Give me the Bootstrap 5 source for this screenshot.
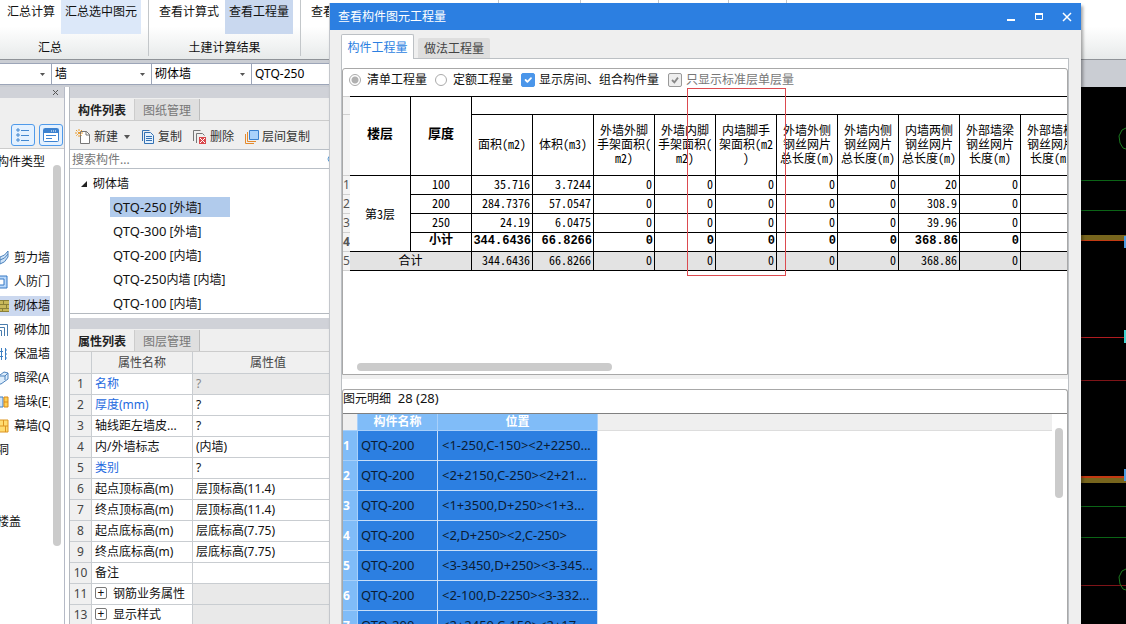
<!DOCTYPE html>
<html lang="zh-CN">
<head>
<meta charset="utf-8">
<meta name="viewport" content="width=device-width, initial-scale=1">
<title>查看构件图元工程量</title>
<link href="https://cdn.jsdelivr.net/npm/bootstrap@5.3.0/dist/css/bootstrap.min.css" rel="stylesheet">
<style>
:root { --ui: "Noto Sans", "Noto Sans CJK SC", sans-serif; --cjk: "Noto Sans CJK SC", sans-serif; --line: #b4b9bf; }
body { font: 12px/16px var(--ui); color: #111; background: #efefef; }
button, input { font: inherit; color: inherit; }
button { border: 0; background: none; padding: 0; white-space: nowrap; }
.latin { font-size: 13px; }

/* ribbon */
.ribbon { height: 60px; background: linear-gradient(#fff 45%, #e7eaea); border-bottom: 1px solid #8f9398; white-space: nowrap; overflow: hidden; }
.ribbon-group { border-right: 1px solid #c3c7ca; height: 56px; flex: none; }
.ribbon-group .tools { height: 34px; padding: 0 7px 0 3px; gap: 2px; }
.ribbon-group .tools.wide { padding: 0 7px 0 6px; }
.ribbon-group button { height: 34px; padding: 4px 4px 14px; }
.ribbon-group .caption { padding-top: 6px; }
.hot { background: #dce8f9; }
.ribbon-group .on { background: #c9d8ef; }

/* selector bar */
.selectors { height: 27px; background: #cacdd3; padding: 3px 0 2px; }
.combo { appearance: none; border: 1px solid #9ca5b8; border-left-width: 0; border-radius: 0; width: 100px; height: 22px; padding: 0 3px; background: #fff url("data:image/svg+xml,%3Csvg xmlns='http://www.w3.org/2000/svg' width='5' height='3'%3E%3Cpath d='M0 0h5L2.5 3z' fill='%23555'/%3E%3C/svg%3E") no-repeat right 6px center; font: inherit; }
.combo.short { width: 52px; }

/* side panels */
.strip { height: 11px; background: #d0d2d8; }
.types { width: 65px; border-right: 1px solid #b5bac6; }
.types .toolrow { height: 51px; padding: 26px 1px 0 0; gap: 4px; background: #efefef; border-bottom: 1px solid #ccc; }
.viewbtn { width: 24px; height: 22px; border: 1px solid #4f9aea; border-radius: 3px; background: #e4f1ff; }
.typelist { list-style: none; margin: 0; padding: 1px 0 0; width: 50px; overflow: hidden; white-space: nowrap; }
.typelist li { height: 24px; display: flex; align-items: center; gap: 5px; }
.typelist li svg { flex: none; }
.typelist li.cut { margin-left: -3px; }
.typelist .sel { background: linear-gradient(#fff 2px, #cbd8ef 2px, #cbd8ef 22px, #fff 22px); }
.thumb { background: #cbcbcb; border-radius: 4px; }
.types .thumb { width: 8px; height: 381px; margin: 16px 3px 0 auto; }
.lists { width: 261px; margin-left: 4px; border-left: 1px solid var(--line); }
.tabrow { height: 23px; background: #efefef; border-bottom: 1px solid #ccc; padding-top: 1px; }
.tabrow button { width: 65px; color: #777; background: #dfdfdf; border-right: 1px solid #bcbcbc; padding-top: 2px; }
.tabrow button.active { color: #222; font-weight: 700; background: #efefef; border-right-color: #ccc; }
.toolbar { height: 28px; background: #efefef; padding: 3px 20px 0 5px; color: #333; }
.toolbar button { display: flex; align-items: center; gap: 3px; }
.search { height: 20px; border: 1px solid #b9bfc6; border-width: 1px 0; padding: 0 2px; outline: 0; background: #fff url("data:image/svg+xml,%3Csvg xmlns='http://www.w3.org/2000/svg' width='3' height='8'%3E%3Ccircle cx='4' cy='4' r='3' fill='none' stroke='%235b9bd5'/%3E%3C/svg%3E") no-repeat right center; }
.search::placeholder { color: #777; opacity: 1; }
.tree { list-style: none; margin: 0; padding: 2px 0 0; height: 145px; border-bottom: 1px solid var(--line); }
.tree li { height: 24px; padding: 2px 0 2px 40px; }
.tree li > span { display: block; width: 120px; height: 20px; padding: 1px 3px; line-height: 18px; }
.tree .root { padding: 3px 0 2px 10px; display: flex; align-items: center; gap: 5px; }
.tree .sel > span { background: #b1cbec; }
.props { width: 100%; table-layout: fixed; border-collapse: separate; border-spacing: 0; }
.props th, .props td { height: 21px; padding: 0 3px; border: 1px solid #c9cdd1; border-width: 0 1px 1px 0; white-space: nowrap; font-weight: 400; line-height: 20px; overflow: hidden; }
.props thead th { height: 22px; }
.props th { background: #f0f0f0; text-align: center; color: #444; padding: 0; }
.props thead .val { padding-left: 14px; }
.props .name { color: #1f6be0; }
.props .off { background: #e9e9e9; color: #888; }
.plus { width: 12px; height: 12px; border: 1px solid #777; border-radius: 2px; display: inline-flex; align-items: center; justify-content: center; line-height: 10px; margin-right: 6px; vertical-align: 1px; }
.model { background: #000; }

/* dialog window */
.dialog { position: absolute; top: 3px; left: 329px; right: 45px; bottom: 0; background: #efefef; border-left: 1px solid #c4c7cc; box-shadow: 2px 3px 3px rgba(0,0,0,.35); overflow: hidden; }
.titlebar { height: 27px; background: #2c7fe1; color: #fff; padding: 0 9px 0 8px; }
.titlebar button { display: flex; }
.dlgtabs { padding: 4px 0 0 11px; height: 28px; gap: 4px; flex: none; }
.dlgtabs button { width: 72px; background: #dedede; color: #444; margin-top: 4px; border-radius: 2px 2px 0 0; height: 20px; padding-top: 2px; }
.dlgtabs button.active { width: 73px; background: #fff; color: #2c7fe1; margin: 0 0 -1px; height: 25px; border: 1px solid #bcc0c4; border-bottom: 0; position: relative; z-index: 1; }
.pane { margin: 0 12px 0 11px; border: 1px solid #bcc0c4; border-bottom: 0; background: #fff; padding-top: 9px; min-height: 0; }
.box { border: 1px solid #a8a8a8; border-radius: 3px 3px 0 0; overflow: hidden; }
.upper { height: 307px; flex: none; }
.divide { height: 4px; background: #efefef; margin-bottom: 10px; flex: none; }
.opts { height: 27px; padding: 0 0 5px 6px; white-space: nowrap; flex: none; }
.opts .form-check-input { margin: 0; width: 12px; height: 12px; border-color: #aaa; opacity: 1; float: none; flex: none; }
.opts .form-check-input[type=checkbox] { width: 14px; height: 14px; border-radius: 2px; }
.opts .form-check-input[type=checkbox]:checked { background-color: #4b96ea; border-color: #4b96ea; }
.opts .form-check-input[type=checkbox]:disabled { background-color: #eee; border-color: #999; background-image: url("data:image/svg+xml,%3Csvg xmlns='http://www.w3.org/2000/svg' viewBox='0 0 20 20'%3E%3Cpath fill='none' stroke='%23888' stroke-width='3' d='m5 10 4 4 6-8'/%3E%3C/svg%3E"); }
.opts .form-check-input[type=radio]:checked { background: radial-gradient(#b0b0b0 3px, #fff 4px); border-color: #aaa; }
.opts label { opacity: 1; }
.opts .lr { margin: 0 8px 0 6px; }
.opts .lc { margin: 0 9px 0 4px; }
.opts label.muted { color: #777; }
.qty { table-layout: fixed; width: 739px; border-collapse: separate; border-spacing: 0; font-family: var(--cjk); font-feature-settings: "hwid"; color: #000; }
.qty th, .qty td { border: 1px solid #000; border-width: 0 1px 1px 0; padding: 0 2px 2px; font-weight: 400; text-align: right; height: 19px; line-height: 14px; white-space: nowrap; }
.qty thead th { text-align: center; border-top: 0; padding: 0 1px 2px; }
.qty thead tr:first-child th { border-top: 1px solid #000; }
.qty thead th.head { font-size: 13px; font-weight: 700; padding-bottom: 6px; }
.qty .mid { text-align: center; }
.qty td.floor { padding-bottom: 0; }
.qty th.gut { border: 1px solid #d0d0d0; border-width: 0 0 1px; background: #f4f4f4; padding: 0; text-align: left; color: #555; font: 12px/18px var(--ui); overflow: hidden; }
.qty thead tr:first-child th.gut { border-top: 1px solid #d0d0d0; }
.qty .sub th.gut { font-weight: 700; }
.qty .sub td { font: 700 12px/14px "Liberation Mono", "Noto Sans CJK SC", monospace; padding: 0 1px 2px; }
.qty .total td { background: #e3e3e3; }
.upper .thumb { width: 255px; height: 8px; margin: auto 0 3px 14px; }
.detail-title { height: 23px; line-height: 16px; font-size: 13px; white-space: pre; flex: none; }
.detail-title span { font-size: 12px; }
.detail-body { border-top: 1px solid #808080; min-height: 0; }
.headfill { height: 17px; background: #efefef; border-bottom: 1px solid #ddd; }
.details { width: 255px; table-layout: fixed; border-collapse: separate; border-spacing: 0; font-size: 13px; flex: none; align-self: flex-start; }
.details th { background: #80bcf8; color: #fff; border: 1px solid #a8d0fa; border-width: 0 1px 1px 0; height: 17px; padding: 0; line-height: 16px; font-size: 12px; text-align: center; }
.details tbody th { text-align: left; }
.details thead th:first-child { background: #efefef; }
.details td { background: #2c7fe1; color: #0b1c33; height: 30px; border: 1px solid #c9dff8; border-width: 0 1px 1px 0; padding: 0 4px 2px 3px; white-space: nowrap; overflow: hidden; text-overflow: ellipsis; }
.details td:last-child { padding-left: 4px; }
.rail { width: 15px; flex: none; }
.rail .thumb { width: 8px; height: 70px; margin: 14px 0 0 3px; }
.marker { position: absolute; left: 357px; top: 85px; width: 99px; height: 188px; border: 1px solid #dc4a4f; pointer-events: none; }
</style>
</head>
<body class="vh-100 overflow-hidden d-flex flex-column position-relative">
<header class="ribbon d-flex flex-shrink-0">
  <section class="ribbon-group text-center">
    <div class="tools d-flex"><button>汇总计算</button><button class="hot">汇总选中图元</button></div>
    <div class="caption pe-5">汇总</div>
  </section>
  <section class="ribbon-group text-center">
    <div class="tools wide d-flex"><button>查看计算式</button><button class="on">查看工程量</button></div>
    <div class="caption">土建计算结果</div>
  </section>
  <section class="ribbon-group" style="width:198px"><div class="tools wide d-flex"><button>查看</button></div></section>
  <section class="ribbon-group" style="width:82px"></section>
  <section class="ribbon-group" style="width:78px"></section>
  <section class="ribbon-group" style="width:70px"></section>
  <section class="ribbon-group" style="width:58px"></section>
</header>
<nav class="selectors d-flex flex-shrink-0" aria-label="构件选择">
  <select class="combo short" aria-label="楼层"><option></option></select>
  <select class="combo" aria-label="构件大类"><option>墙</option></select>
  <select class="combo" aria-label="构件类型"><option>砌体墙</option></select>
  <select class="combo latin" aria-label="构件"><option>QTQ-250</option></select>
</nav>
<main class="d-flex flex-grow-1 overflow-hidden bg-white">
  <aside class="types flex-shrink-0 d-flex flex-column">
    <div class="strip d-flex align-items-center justify-content-end pe-1 flex-shrink-0"><button aria-label="关闭" class="d-flex"><svg width="8" height="7"><path d="M1 1l5 5M6 1L1 6" stroke="#555"/></svg></button></div>
    <div class="toolrow d-flex justify-content-end flex-shrink-0">
      <button class="viewbtn d-flex align-items-center justify-content-center flex-shrink-0" aria-label="列表"><svg width="14" height="14"><path d="M1 1h2v2H1zM1 6h2v2H1zM1 11h2v2H1z" fill="none" stroke="#4287cf"/><path d="M5 2.500h8M5 7.500h8M5 12.500h8" stroke="#4287cf"/></svg></button>
      <button class="viewbtn d-flex align-items-center justify-content-center flex-shrink-0" aria-label="窗口"><svg width="16" height="14"><rect x=".5" y=".5" width="15" height="13" rx="1" fill="#fff" stroke="#3c82d0"/><path d="M1 1h14v4H1z" fill="#3c82d0"/><path d="M8 3h1m1 0h1m1 0h1" stroke="#fff"/><path d="M3 7.500h10M3 10.500h6" stroke="#3c82d0"/></svg></button>
    </div>
    <div class="d-flex flex-grow-1">
      <ul class="typelist">
        <li class="cut">构件类型</li><li></li><li></li><li></li>
        <li><svg width="9" height="16"><path d="M0 7Q5 6 8 1v6Q5 13 0 14z" fill="#cfe3f8" stroke="#4d83bd"/><path d="M0 10q5-1 8-6" fill="none" stroke="#4d83bd"/></svg>剪力墙</li>
        <li><svg width="9" height="16"><path d="M0 2h7v12H0" fill="#b9d8fa" stroke="#3678c4"/><path d="M0 5h4v6H0" fill="#fff" stroke="#3678c4"/></svg>人防门</li>
        <li class="sel"><svg width="9" height="14"><path d="M0 1h9v12H0z" fill="#c9b95a"/><path d="M0 1.500h9M0 5.500h9M0 9.500h9M0 12.500h9M3.500 2v4M6.500 6v4M2.500 10v3" stroke="#8a8037"/></svg>砌体墙</li>
        <li><svg width="9" height="16"><path d="M0 2.500h7.500V14M0 5.500h4.500V14M0 8.500h1.500V14" fill="none" stroke="#497cad"/></svg>砌体加筋</li>
        <li><svg width="9" height="16"><path d="M1.500 2v12M5.500 2v12M0 5.500h3M0 10.500h3" stroke="#3d7fc2"/><path d="M5 4h2M5 8h2M5 12h2" stroke="#3d7fc2"/></svg>保温墙</li>
        <li><svg width="9" height="16"><path d="M0 5l4-3 4 1v6l-7 5H0" fill="#dcecfb" stroke="#4d83bd"/><path d="M0 6l5 0 3-3M5 6v4" fill="none" stroke="#4d83bd"/></svg>暗梁(A)</li>
        <li><svg width="9" height="14"><path d="M0 2h3v10H0" fill="#cfe3f8" stroke="#3d7fc2"/><path d="M4 2h4v10H4z" fill="#ffcf50" stroke="#d98a1c"/><path d="M4 7h4" stroke="#d98a1c"/></svg>墙垛(E)</li>
        <li><svg width="9" height="14"><path d="M0 1h8v12H0" fill="#ffdc70" stroke="#dc9420"/><path d="M0 7h8M3.500 1v6M5.500 7v6" stroke="#dc9420"/></svg>幕墙(Q)</li>
        <li class="cut">洞</li><li></li><li></li><li class="cut">楼盖</li>
      </ul>
      <div class="thumb"></div>
    </div>
  </aside>
  <section class="lists flex-shrink-0">
    <div class="strip"></div>
    <div class="tabrow d-flex"><button class="active">构件列表</button><button>图纸管理</button></div>
    <div class="toolbar d-flex align-items-center justify-content-between">
      <button><svg width="16" height="16"><path d="M5.500 2.500h6l3 3v9h-9z" fill="#fff" stroke="#777"/><path d="M11 2v4h4" fill="none" stroke="#777"/><path d="M4 0v8M0 4h8M1 1l6 6M7 1L1 7" stroke="#e99a2b" stroke-dasharray="2 1"/></svg>新建<svg width="10" height="4"><path d="M3 0h6L6 4z" fill="#555"/></svg></button>
      <button><svg width="14" height="16"><path d="M1.500 12V1.500h7" fill="none" stroke="#3572b4"/><path d="M3.500 3.500h6l3 3v8h-9z" fill="#e5f1fd" stroke="#3572b4"/><path d="M5 7.500h6M5 9.500h6M5 11.500h6" stroke="#3572b4"/></svg>复制</button>
      <button><svg width="15" height="16"><path d="M1.500 12V1.500h7M4.500 14V4.500h6l2 2" fill="none" stroke="#777"/><path d="M7 8h7v7H7z" fill="#d9484c"/><path d="M8 9l5 5M13 9l-5 5" stroke="#fff"/></svg>删除</button>
      <button><svg width="15" height="16"><path d="M1.500 5v9.500H10M3.500 3v9.500H12" fill="none" stroke="#e58a2c"/><path d="M5.500 1.500h9v9h-9z" fill="#a9d1fb" stroke="#3a80cf"/></svg>层间复制</button>
    </div>
    <input class="search d-block w-100" type="text" placeholder="搜索构件..." aria-label="搜索构件">
    <ul class="tree">
      <li class="root"><svg width="8" height="8"><path d="M7 1v6H1z" fill="#222"/></svg>砌体墙</li>
      <li class="sel"><span><span class="latin">QTQ-250</span> [外墙]</span></li>
      <li><span><span class="latin">QTQ-300</span> [外墙]</span></li>
      <li><span><span class="latin">QTQ-200</span> [内墙]</span></li>
      <li><span><span class="latin">QTQ-250</span>内墙 [内墙]</span></li>
      <li><span><span class="latin">QTQ-100</span> [内墙]</span></li>
    </ul>
    <div class="pt-1"><div class="strip"></div></div>
    <div class="tabrow d-flex"><button class="active">属性列表</button><button>图层管理</button></div>
    <table class="props">
      <colgroup><col style="width:22px"><col style="width:101px"><col></colgroup>
      <thead><tr><th></th><th>属性名称</th><th class="val">属性值</th></tr></thead>
      <tbody>
        <tr><th>1</th><td class="name">名称</td><td class="off">?</td></tr>
        <tr><th>2</th><td class="name">厚度(mm)</td><td>?</td></tr>
        <tr><th>3</th><td>轴线距左墙皮...</td><td>?</td></tr>
        <tr><th>4</th><td>内/外墙标志</td><td>(内墙)</td></tr>
        <tr><th>5</th><td class="name">类别</td><td>?</td></tr>
        <tr><th>6</th><td>起点顶标高(m)</td><td>层顶标高(11.4)</td></tr>
        <tr><th>7</th><td>终点顶标高(m)</td><td>层顶标高(11.4)</td></tr>
        <tr><th>8</th><td>起点底标高(m)</td><td>层底标高(7.75)</td></tr>
        <tr><th>9</th><td>终点底标高(m)</td><td>层底标高(7.75)</td></tr>
        <tr><th>10</th><td>备注</td><td></td></tr>
        <tr><th>11</th><td><span class="plus">+</span>钢筋业务属性</td><td class="off"></td></tr>
        <tr><th>13</th><td><span class="plus">+</span>显示样式</td><td class="off"></td></tr>
      </tbody>
    </table>
  </section>
  <section class="model flex-grow-1 d-flex justify-content-end" aria-label="模型视图">
    <svg width="46" height="537" shape-rendering="crispEdges">
      <path d="M0 93.500h46M0 123.500h46M0 419.500h46M0 450.500h46" stroke="#0b6416"/>
      <path d="M0 148h46v5H0zM0 391h46v5H0z" fill="#77651d"/>
      <path d="M0 153h46v1H0zM0 389h46v2H0z" fill="#c23a12"/>
      <path d="M0 250.500h46" stroke="#b01c20"/><path d="M0 293.500h46M0 498.500h46" stroke="#7e1418"/>
      <path d="M44 149h2v12h-2zM44 382h2v12h-2z" fill="#4a9be0"/><path d="M44 243h2v13h-2z" fill="#3fd3d0"/>
      <path d="M46 41l-4 2-3 6 1 7 3 5 3 1M46 482l-4 2-3 6 1 7 3 5 3 1" fill="none" stroke="#1b7a1f" shape-rendering="auto"/>
    </svg>
  </section>
</main>

<div class="dialog d-flex flex-column" role="dialog" aria-labelledby="dlg-title">
  <div class="titlebar d-flex align-items-center flex-shrink-0">
    <span id="dlg-title" class="me-auto">查看构件图元工程量</span>
    <button class="me-3" aria-label="最小化"><svg width="12" height="12"><path d="M1 8h8v2H1z" fill="#fff"/></svg></button>
    <button class="me-3" aria-label="最大化"><svg width="12" height="12"><path d="M1.500 2.500h7v6h-7z" fill="none" stroke="#fff"/><path d="M1 3h8" stroke="#fff" stroke-width="2"/></svg></button>
    <button aria-label="关闭"><svg width="10" height="12"><path d="M1 2l8 8M9 2l-8 8" stroke="#fff" stroke-width="1.500"/></svg></button>
  </div>
  <div class="dlgtabs d-flex"><button class="active">构件工程量</button><button>做法工程量</button></div>
  <div class="pane d-flex flex-column flex-grow-1">
    <section class="box upper d-flex flex-column">
      <div class="opts d-flex align-items-center">
        <input class="form-check-input" type="radio" name="mode" id="m1" checked><label class="lr" for="m1">清单工程量</label>
        <input class="form-check-input" type="radio" name="mode" id="m2"><label class="lr" for="m2">定额工程量</label>
        <input class="form-check-input" type="checkbox" id="c1" checked><label class="lc" for="c1">显示房间、组合构件量</label>
        <input class="form-check-input" type="checkbox" id="c2" checked disabled><label class="lc muted" for="c2">只显示标准层单层量</label>
      </div>
      <table class="qty">
        <colgroup><col style="width:7px"><col span="12" style="width:61px"></colgroup>
        <thead>
          <tr><th class="gut"></th><th class="head" rowspan="2">楼层</th><th class="head" rowspan="2">厚度</th><th colspan="10"></th></tr>
          <tr style="height:61px"><th class="gut"></th><th>面积(m2)</th><th>体积(m3)</th><th>外墙外脚<br>手架面积(<br>m2)</th><th>外墙内脚<br>手架面积(<br>m2)</th><th>内墙脚手<br>架面积(m2<br>)</th><th>外墙外侧<br>钢丝网片<br>总长度(m)</th><th>外墙内侧<br>钢丝网片<br>总长度(m)</th><th>内墙两侧<br>钢丝网片<br>总长度(m)</th><th>外部墙梁<br>钢丝网片<br>长度(m)</th><th>外部墙柱<br>钢丝网片<br>长度(m)</th></tr>
        </thead>
        <tbody>
          <tr><th class="gut">1</th><td class="mid floor" rowspan="4">第3层</td><td class="mid">100</td><td>35.716</td><td>3.7244</td><td>0</td><td>0</td><td>0</td><td>0</td><td>0</td><td>20</td><td>0</td><td></td></tr>
          <tr><th class="gut">2</th><td class="mid">200</td><td>284.7376</td><td>57.0547</td><td>0</td><td>0</td><td>0</td><td>0</td><td>0</td><td>308.9</td><td>0</td><td></td></tr>
          <tr><th class="gut">3</th><td class="mid">250</td><td>24.19</td><td>6.0475</td><td>0</td><td>0</td><td>0</td><td>0</td><td>0</td><td>39.96</td><td>0</td><td></td></tr>
          <tr class="sub"><th class="gut">4</th><td class="mid">小计</td><td>344.6436</td><td>66.8266</td><td>0</td><td>0</td><td>0</td><td>0</td><td>0</td><td>368.86</td><td>0</td><td></td></tr>
          <tr class="total"><th class="gut">5</th><td class="mid" colspan="2">合计</td><td>344.6436</td><td>66.8266</td><td>0</td><td>0</td><td>0</td><td>0</td><td>0</td><td>368.86</td><td>0</td><td></td></tr>
        </tbody>
      </table>
      <div class="thumb"></div>
    </section>
    <div class="divide"></div>
    <section class="box flex-grow-1 d-flex flex-column border-bottom-0">
      <div class="detail-title"><span>图元明细</span>  28 (28)</div>
      <div class="detail-body d-flex flex-grow-1">
        <table class="details">
          <colgroup><col style="width:15px"><col style="width:80px"><col></colgroup>
          <thead><tr><th></th><th>构件名称</th><th>位置</th></tr></thead>
          <tbody>
            <tr><th>1</th><td>QTQ-200</td><td>&lt;1-250,C-150&gt;&lt;2+2250...</td></tr>
            <tr><th>2</th><td>QTQ-200</td><td>&lt;2+2150,C-250&gt;&lt;2+21...</td></tr>
            <tr><th>3</th><td>QTQ-200</td><td>&lt;1+3500,D+250&gt;&lt;1+3...</td></tr>
            <tr><th>4</th><td>QTQ-200</td><td>&lt;2,D+250&gt;&lt;2,C-250&gt;</td></tr>
            <tr><th>5</th><td>QTQ-200</td><td>&lt;3-3450,D+250&gt;&lt;3-345...</td></tr>
            <tr><th>6</th><td>QTQ-200</td><td>&lt;2-100,D-2250&gt;&lt;3-332...</td></tr>
            <tr><th>7</th><td>QTQ-200</td><td>&lt;2+2450,C-150&gt;&lt;2+17...</td></tr>
          </tbody>
        </table>
        <div class="flex-grow-1"><div class="headfill"></div></div>
        <div class="rail"><div class="thumb"></div></div>
      </div>
    </section>
  </div>
  <div class="marker"></div>
</div>
<script src="https://cdn.jsdelivr.net/npm/bootstrap@5.3.0/dist/js/bootstrap.bundle.min.js"></script>
</body>
</html>
